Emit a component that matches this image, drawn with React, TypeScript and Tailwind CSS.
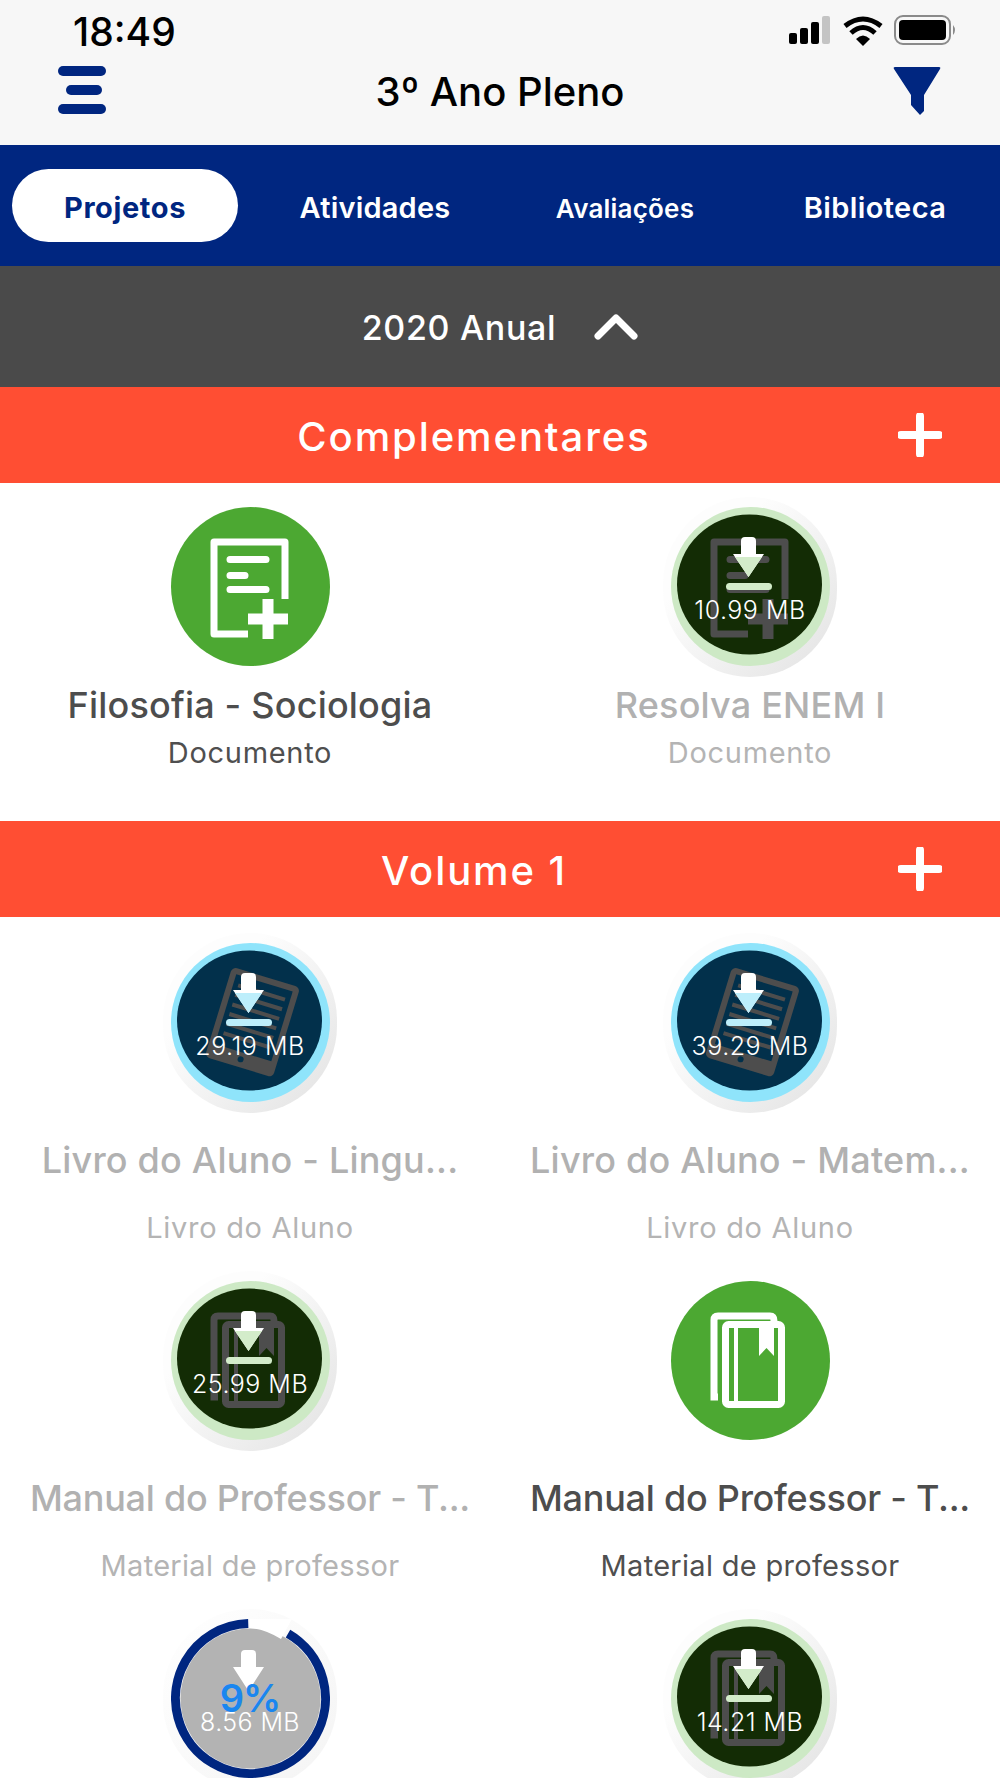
import React from "react";

type ITEM = {
  title?: string;
  sub?: string;
  icon: "doc" | "tablet" | "books";
  tone: "ready" | "green" | "blue" | "progress";
  size?: string;
};

const complementares: ITEM[] = [
  { title: "Filosofia - Sociologia", sub: "Documento", icon: "doc", tone: "ready" },
  { title: "Resolva ENEM I", sub: "Documento", icon: "doc", tone: "green", size: "10.99 MB" },
];

// the last row runs off the bottom of the screen, only the circles are visible
const volume: ITEM[] = [
  { title: "Livro do Aluno - Lingu...", sub: "Livro do Aluno", icon: "tablet", tone: "blue", size: "29.19 MB" },
  { title: "Livro do Aluno - Matem...", sub: "Livro do Aluno", icon: "tablet", tone: "blue", size: "39.29 MB" },
  { title: "Manual do Professor - T...", sub: "Material de professor", icon: "books", tone: "green", size: "25.99 MB" },
  { title: "Manual do Professor - T...", sub: "Material de professor", icon: "books", tone: "ready" },
  { icon: "books", tone: "progress", size: "8.56 MB" },
  { icon: "books", tone: "green", size: "14.21 MB" },
];

function DocIcon({ color }: { color: string }) {
  return (
    <>
      <path d="M77 127H43V35H114V92" fill="none" stroke={color} strokeWidth="7" strokeLinejoin="round" />
      <path d="M59 52.5H95M59 68.5H74M59 82.5H95" fill="none" stroke={color} strokeWidth="7" strokeLinecap="round" />
      <path d="M97 92V132M77 112H117" fill="none" stroke={color} strokeWidth="11" />
    </>
  );
}

function TabletIcon({ color, bg }: { color: string; bg: string }) {
  return (
    <g transform="rotate(17 81 79)">
      <rect x="46" y="32" width="71" height="94" rx="5" fill={color} />
      <rect x="52" y="38" width="59" height="73" fill={bg} />
      <path d="M57 48H106M57 58H106M57 68H106M57 78H106M57 88H106M57 98H106" stroke={color} strokeWidth="4" />
      <circle cx="81" cy="118" r="3" fill={bg} />
    </g>
  );
}

function BooksIcon({ color }: { color: string }) {
  return (
    <>
      <path d="M47 116H43V39Q43 35 47 35H99Q103 35 103 40" fill="none" stroke={color} strokeWidth="7" />
      <rect x="54.5" y="43.5" width="56" height="80" rx="3" fill="none" stroke={color} strokeWidth="7" />
      <path d="M65 44V123" stroke={color} strokeWidth="4" />
      <path d="M88 47H103V75L95.5 67L88 75Z" fill={color} />
    </>
  );
}

function DownloadArrow({ tint }: { tint: string }) {
  return (
    <>
      <path d="M70 34Q70 30 74 30H81Q85 30 85 34V47H93L77.5 70L62 47H70Z" fill="#ffffff" />
      <path d="M64 50H91L77.5 70Z" fill={tint} />
      <rect x="55" y="76" width="46" height="7" rx="3.5" fill={tint} />
    </>
  );
}

function Circle({ item }: { item: ITEM }) {
  const { icon, tone, size } = item;

  if (tone === "ready") {
    return (
      <div className="relative h-[159px] w-[159px] rounded-full bg-[#4ca832]">
        <svg viewBox="0 0 159 159" className="h-full w-full">
          {icon === "doc" && <DocIcon color="#ffffff" />}
          {icon === "books" && <BooksIcon color="#ffffff" />}
        </svg>
      </div>
    );
  }

  if (tone === "progress") {
    return (
      <div className="relative h-[159px] w-[159px]">
        <div className="absolute -left-2 -top-2.5 h-[180px] w-[174px] rounded-full bg-gradient-to-br from-[#ffffff] to-[#f4f4f4]" />
        <svg viewBox="0 0 159 159" className="absolute inset-0 h-full w-full">
          <circle cx="79.5" cy="79.5" r="70" fill="#b3b3b3" />
          <circle
            cx="79.5"
            cy="79.5"
            r="75"
            fill="none"
            stroke="#002680"
            strokeWidth="9"
            strokeDasharray="429 471"
            transform="rotate(-60 79.5 79.5)"
          />
          <path d="M79 -2H122L110 20Q94 10 79 9Z" fill="#ffffff" />
          <path d="M70 35Q70 31 74 31H81Q85 31 85 35V48H93L77.5 72L62 48H70Z" fill="#ffffff" />
        </svg>
        <div className="absolute inset-x-0 top-[59px] text-center text-[38px] leading-[40px] font-semibold tracking-[-1px] text-[#1a86f0]">
          9%
        </div>
        <div className="absolute inset-x-0 top-[89px] text-center text-[25px] leading-[28px] font-light tracking-[0.4px] text-white">
          {size}
        </div>
      </div>
    );
  }

  const isBlue = tone === "blue";
  const dark = isBlue ? "#02304b" : "#132c05";
  const tint = isBlue ? "#bdeefb" : "#d3ecca";

  return (
    <div className="relative h-[159px] w-[159px]">
      <div className="absolute -left-2 -top-2.5 h-[180px] w-[174px] rounded-full bg-gradient-to-br from-[#fdfdfd] from-30% to-[#e2e2e2]" />
      <div className={`absolute inset-0 rounded-full ${isBlue ? "bg-[#8fe4fb]" : "bg-[#cde9c5]"}`} />
      <svg viewBox="0 0 159 159" className="absolute inset-0 h-full w-full">
        <ellipse cx="78.5" cy="77.5" rx="72.5" ry="70" fill={dark} />
        {icon === "doc" && <DocIcon color="#4d4d4d" />}
        {icon === "tablet" && <TabletIcon color="#4d4d4d" bg={dark} />}
        {icon === "books" && <BooksIcon color="#4d4d4d" />}
        <DownloadArrow tint={tint} />
      </svg>
      <div className="absolute inset-x-0 top-[89px] text-center text-[25px] leading-[28px] font-light tracking-[0.5px] text-white">
        {size}
      </div>
    </div>
  );
}

function Item({ item, dense }: { item: ITEM; dense?: boolean }) {
  const muted = item.tone !== "ready";
  const isManual = item.icon === "books";
  return (
    <div className="flex min-w-0 flex-col items-center">
      <Circle item={item} />
      {item.title && (
        <p
          className={`${dense ? "mt-[18px]" : "mt-[37px]"} whitespace-nowrap text-[36px] leading-[42px] font-medium ${
            isManual ? "tracking-[-0.25px]" : "tracking-[0.2px]"
          } ${muted ? "text-[#b1b1b1]" : "text-[#4d4d4d]"}`}
        >
          {item.title}
        </p>
      )}
      {item.sub && (
        <p
          className={`${dense ? "mt-[10px]" : "mt-[30px]"} whitespace-nowrap text-[29px] leading-[34px] ${
            isManual ? "tracking-[0.3px]" : "tracking-[0.7px]"
          } ${muted ? "text-[#b4b4b4]" : "text-[#4f4f4f]"}`}
        >
          {item.sub}
        </p>
      )}
    </div>
  );
}

function SectionBar({ title }: { title: string }) {
  return (
    <div className="relative flex h-[96px] items-center justify-center bg-[#ff4e33] pr-[52px] pt-[4px]">
      <span className="text-[40px] leading-none font-medium tracking-[1.9px] text-white">{title}</span>
      <svg viewBox="0 0 44 44" className="absolute right-[58px] top-[26px] h-[44px] w-[44px]">
        <path d="M22 3V41M3 22H41" stroke="#ffffff" strokeWidth="8" strokeLinecap="round" />
      </svg>
    </div>
  );
}

export default function App() {
  return (
    <div className="h-[1778px] w-[1000px] overflow-hidden bg-white font-['Inter','Liberation_Sans',sans-serif]">
      {/* status + title */}
      <div className="h-[145px] bg-[#f7f7f7]">
        <div className="flex h-[62px] items-center justify-between pl-[73px] pr-[40px]">
          <span className="text-[39px] leading-none font-medium text-black">18:49</span>
          <svg viewBox="0 0 172 32" className="h-[32px] w-[172px]">
            <rect x="1" y="18" width="8" height="11" rx="2" fill="#000" />
            <rect x="12" y="13" width="8" height="16" rx="2" fill="#000" />
            <rect x="23" y="7" width="8" height="22" rx="2" fill="#000" />
            <rect x="34" y="1" width="8" height="28" rx="2" fill="#c4c4c4" />
            <path d="M57 11Q75 -3 93 11" fill="none" stroke="#000" strokeWidth="5" />
            <path d="M63 18Q75 7 87 18" fill="none" stroke="#000" strokeWidth="5" />
            <path d="M68 24Q75 17 82 24L75 31Z" fill="#000" />
            <rect x="107" y="1" width="55" height="28" rx="8" fill="none" stroke="#8a8a8a" strokeWidth="2" />
            <rect x="111" y="5" width="47" height="20" rx="4" fill="#000" />
            <path d="M165 10Q169 15 165 20Z" fill="#8a8a8a" />
          </svg>
        </div>
        <div className="relative flex h-[62px] items-center justify-center pb-[2px]">
          <svg viewBox="0 0 48 50" className="absolute left-[58px] top-[4px] h-[50px] w-[48px]">
            <rect x="0" y="0" width="48" height="10" rx="5" fill="#002680" />
            <rect x="8" y="19" width="36" height="10" rx="5" fill="#002680" />
            <rect x="0" y="38" width="48" height="10" rx="5" fill="#002680" />
          </svg>
          <h1 className="text-[40px] leading-none font-medium text-black">3º Ano Pleno</h1>
          <svg viewBox="0 0 48 48" className="absolute right-[59px] top-[5px] h-[48px] w-[48px]">
            <path d="M2 0H46Q48 0 47 2L31 28V44L27 48L18 38V28L1 2Q0 0 2 0Z" fill="#002680" />
          </svg>
        </div>
      </div>

      {/* tabs */}
      <div className="grid h-[121px] grid-cols-4 items-center bg-[#002680]">
        <div className="ml-3 flex h-[73px] w-[226px] items-center justify-center rounded-[37px] bg-white pt-[4px] text-[29px] font-bold tracking-[0.6px] text-[#002680]">
          Projetos
        </div>
        <div className="pt-[5px] text-center text-[29px] font-semibold tracking-[0.2px] text-white">Atividades</div>
        <div className="pt-[5px] text-center text-[26px] font-semibold tracking-[0.2px] text-white">Avaliações</div>
        <div className="pt-[5px] text-center text-[29px] font-semibold tracking-[0.4px] text-white">Biblioteca</div>
      </div>

      {/* year */}
      <div className="flex h-[121px] items-center justify-center gap-[38px] bg-[#4a4a4a]">
        <span className="pt-[3px] text-[34px] leading-none font-medium tracking-[0.7px] text-white">2020 Anual</span>
        <svg viewBox="0 0 44 26" className="h-[26px] w-[44px]">
          <path d="M4 22L22 4L40 22" fill="none" stroke="#ffffff" strokeWidth="7" strokeLinecap="round" strokeLinejoin="round" />
        </svg>
      </div>

      <SectionBar title="Complementares" />
      <div className="grid h-[338px] grid-cols-2 content-start pt-[24px]">
        {complementares.map((item) => (
          <Item key={item.title} item={item} dense />
        ))}
      </div>

      <SectionBar title="Volume 1" />
      <div className="grid grid-cols-2 gap-y-[36px] pt-[26px]">
        {volume.map((item, i) => (
          <Item key={i} item={item} />
        ))}
      </div>
    </div>
  );
}
